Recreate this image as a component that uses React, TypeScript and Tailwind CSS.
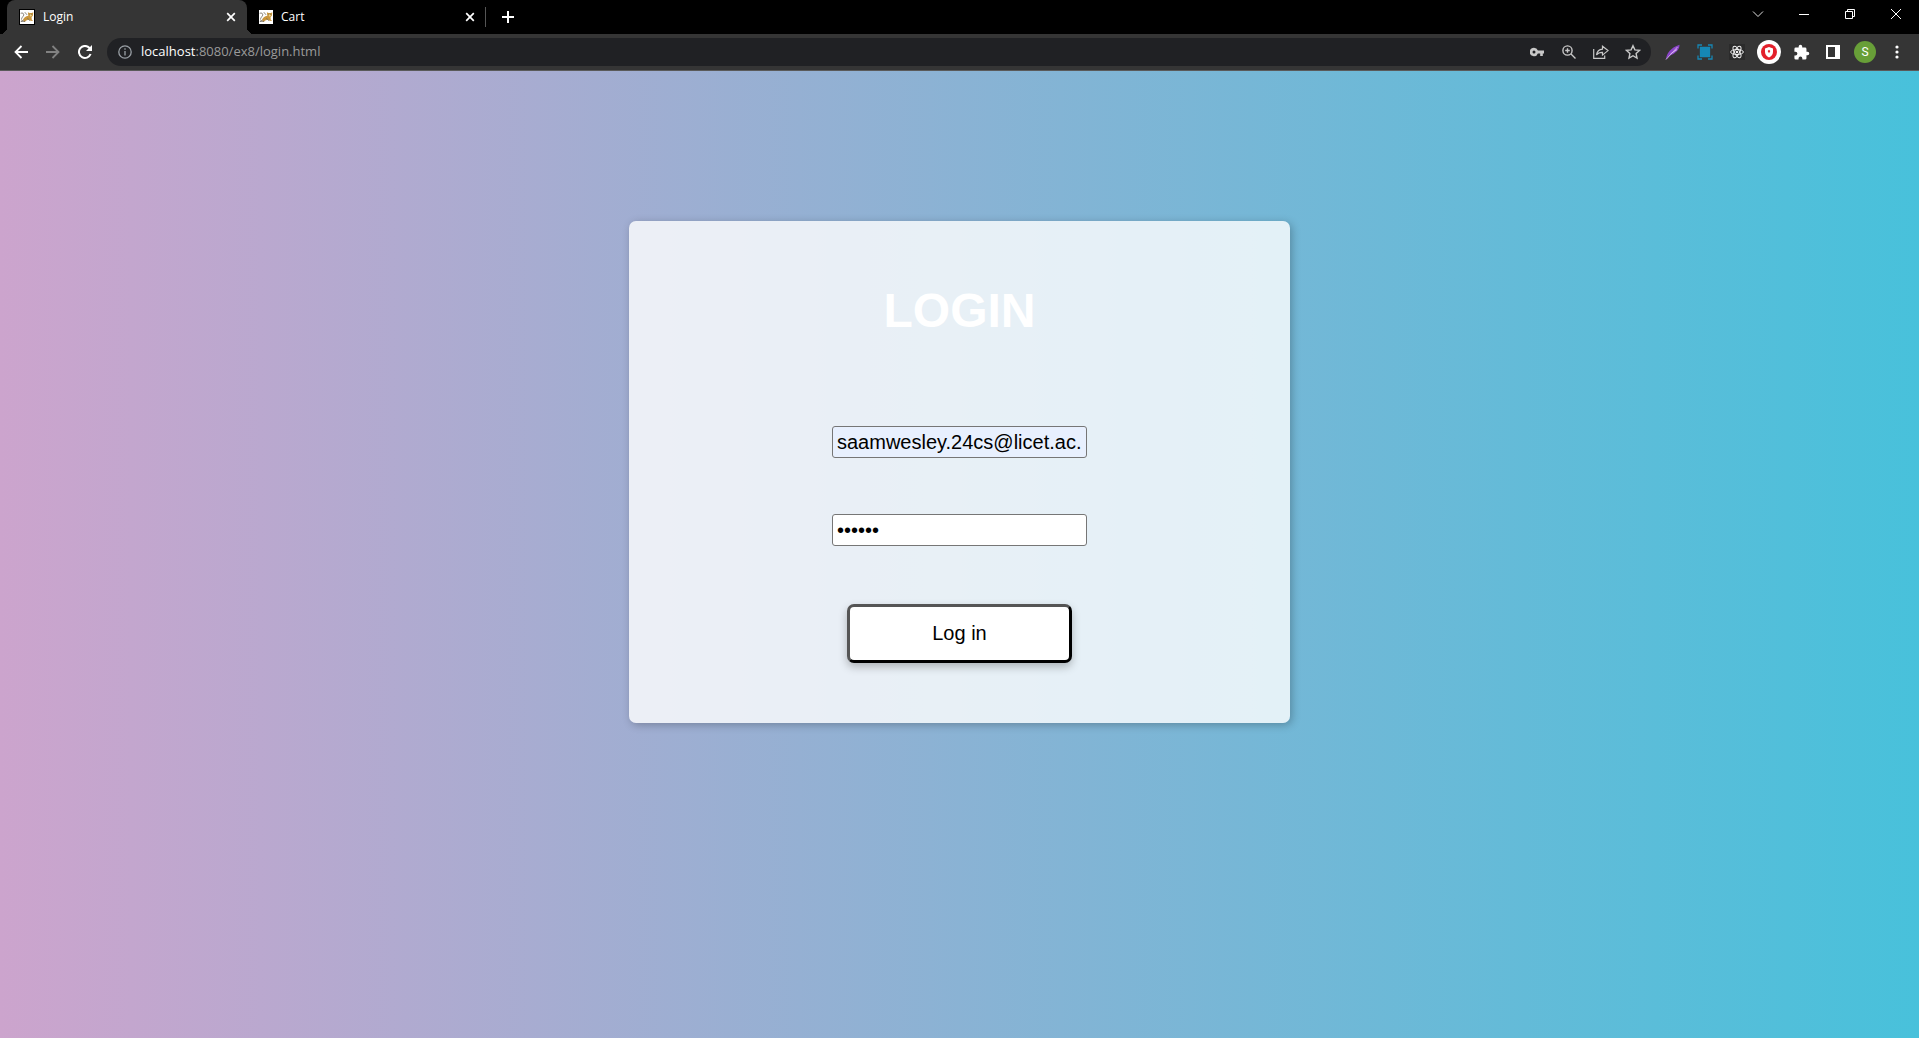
import React from "react";
import type { ReactNode } from "react";

function CatIcon({ size }: { size: string }) {
  return (
    <svg viewBox="0 0 16 16" className={size} aria-hidden="true">
      <rect width="16" height="16" fill="#fff" />
      <path d="M3.500 11.500c.5-2.500 3-4.500 6-5L9 2.500l2 .8h2.500l1.700-.8-.4 3.800-1.600 2 .3 2.700 1.700 1.500-3.200-.2-1.800-1.500-3 1.200-2.400 1.600z" fill="#c9963c" />
      <path d="M.8 3.800c2-1 4 .2 3.500 2S1.500 8.500 1.800 11M4 11.500l-3 1.500h5M5.500 2.500l2.500 3M8.500 9.500l3 2.800" stroke="#5d5647" strokeWidth="0.8" fill="none" />
      <path d="M10.800 4.500h3l-.6 2.500-1.600.3z" fill="#f0d48a" />
      <path d="M11.300 4.500v1M13.200 4.500v1" stroke="#443a24" strokeWidth="0.7" />
    </svg>
  );
}

function Close() {
  return (
    <svg viewBox="0 0 10 10" className="size-[10px]" stroke="#fff" strokeWidth="1.7" aria-hidden="true">
      <path d="M1.2 1.2l7.6 7.6M8.8 1.2L1.2 8.8" />
    </svg>
  );
}

function IconButton({ label, children, className = "w-8" }: { label: string; children: ReactNode; className?: string }) {
  return (
    <button type="button" aria-label={label} className={`flex h-7 shrink-0 items-center justify-center ${className}`}>
      {children}
    </button>
  );
}

function TabStrip() {
  return (
    <div className="flex h-[34px] items-stretch bg-black text-[12px] text-white">
      <div className="relative ml-[7px] flex w-60 items-center rounded-t-lg bg-[#353535] pr-[11px] pl-3">
        <span className="absolute bottom-0 -left-[7px] size-[7px] bg-[radial-gradient(circle_at_top_left,transparent_7px,#353535_7px)]" />
        <span className="absolute -right-[7px] bottom-0 size-[7px] bg-[radial-gradient(circle_at_top_right,transparent_7px,#353535_7px)]" />
        <span className="border border-black">
          <CatIcon size="size-[14px]" />
        </span>
        <span className="ml-2 flex-1">Login</span>
        <button type="button" aria-label="Close Login tab">
          <Close />
        </button>
      </div>
      <div className="flex w-[238px] items-center pr-[10px] pl-3">
        <CatIcon size="size-[14px]" />
        <span className="ml-2 flex-1">Cart</span>
        <button type="button" aria-label="Close Cart tab">
          <Close />
        </button>
      </div>
      <div className="my-[7px] border-l border-[#555]" />
      <IconButton label="New tab" className="ml-2 mt-[3px] w-7">
        <svg viewBox="0 0 12 12" className="size-3" stroke="#fff" strokeWidth="2">
          <path d="M6 0v12M0 6h12" />
        </svg>
      </IconButton>
      <div className="ml-auto flex items-start">
        <IconButton label="Search tabs" className="w-[46px]">
          <svg viewBox="0 0 12 12" className="size-3" fill="none" stroke="#e0e0e0">
            <path d="M1 3.500l5 5 5-5" />
          </svg>
        </IconButton>
        <IconButton label="Minimize" className="w-[46px]">
          <svg viewBox="0 0 10 10" className="size-[10px]" fill="none" stroke="#fff">
            <path d="M0 5.500h10" />
          </svg>
        </IconButton>
        <IconButton label="Restore" className="w-[46px]">
          <svg viewBox="0 0 10 10" className="size-[10px]" fill="none" stroke="#fff">
            <path d="M.5 2.500h7v7h-7zM2.500 2.500v-2h7v7h-2" />
          </svg>
        </IconButton>
        <IconButton label="Close window" className="w-[46px]">
          <svg viewBox="0 0 10 10" className="size-[10px]" fill="none" stroke="#fff">
            <path d="M0 0l10 10M10 0L0 10" />
          </svg>
        </IconButton>
      </div>
    </div>
  );
}

function Toolbar() {
  return (
    <div className="flex h-[37px] items-center border-b border-[#5a5a5a] bg-[#353535] pr-[6px] pl-[5px]">
      <IconButton label="Back">
        <svg viewBox="0 0 14 14" className="size-[14px]" fill="none" stroke="#fff" strokeWidth="1.8">
          <path d="M14 7H1.500M7.500 1L1.500 7l6 6" />
        </svg>
      </IconButton>
      <IconButton label="Forward">
        <svg viewBox="0 0 14 14" className="size-[14px]" fill="none" stroke="#828282" strokeWidth="1.8">
          <path d="M0 7h12.500M6.500 1l6 6-6 6" />
        </svg>
      </IconButton>
      <IconButton label="Reload">
        <svg viewBox="0 0 14 14" className="size-[14px]" fill="none" stroke="#fff" strokeWidth="2">
          <path d="M12.600 9A6 6 0 1 1 11.500 3L13 5" />
          <path d="M14 0v6H8z" fill="#fff" stroke="none" />
        </svg>
      </IconButton>
      <div className="ml-[6px] flex h-7 min-w-0 flex-1 items-center rounded-full bg-[#202124] pr-[2px] pl-[11px]">
        <svg viewBox="0 0 14 14" className="size-[14px] shrink-0" fill="none" stroke="#9aa0a6" strokeWidth="1.3" aria-hidden="true">
          <circle cx="7" cy="7" r="6.200" />
          <path d="M7 6v4.500M7 3.300v1.500" />
        </svg>
        <div className="ml-[9px] min-w-0 flex-1 text-[13px] text-[#9a9a9a]">
          <span className="text-white">localhost</span>:8080/ex8/login.html
        </div>
        <IconButton label="Saved passwords">
          <svg viewBox="0 0 14 10" className="h-[10px] w-[14px]" fill="#c8c8c8">
            <path fillRule="evenodd" d="M4 .8a4.200 4.200 0 1 0 3.900 5.700h2.300V9h2.600V6.500H14v-3H7.900A4.200 4.200 0 0 0 4 .8zM4 3.500a1.500 1.500 0 1 1 0 3 1.500 1.500 0 0 1 0-3z" />
          </svg>
        </IconButton>
        <IconButton label="Zoom">
          <svg viewBox="0 0 14 14" className="size-[14px]" fill="none" stroke="#c8c8c8" strokeWidth="1.4">
            <circle cx="5.500" cy="5.500" r="4.600" />
            <path d="M9 9l4.500 4.500M5.500 3.200v4.600M3.200 5.500h4.600" />
          </svg>
        </IconButton>
        <IconButton label="Share">
          <svg viewBox="0 0 16 14" className="h-[14px] w-4" fill="none" stroke="#c8c8c8" strokeWidth="1.2">
            <path d="M.7 4v9.300h11V10.500M3.500 10C4 6.500 6 4.500 9.500 4.200V1.200L15 5.600l-5.500 4.500V7.300C7 7.200 5 8 3.500 10z" />
          </svg>
        </IconButton>
        <IconButton label="Bookmark">
          <svg viewBox="0 0 16 16" className="size-4" fill="none" stroke="#c8c8c8" strokeWidth="1.4">
            <path d="M8 1.700l1.900 4.200 4.600.5-3.400 3.100.9 4.500L8 11.700 4 14l.9-4.500L1.500 6.400l4.600-.5z" />
          </svg>
        </IconButton>
      </div>
      <div className="ml-[6px] flex items-center">
        <IconButton label="Feather extension">
          <svg viewBox="0 0 16 16" className="size-4">
            <path d="M1 15.500C1.500 9 6 3.500 14.500.8c.3 4.200-3.500 8.700-10 11z" fill="#8a45c8" />
            <path d="M1 15.500L12.500 3M5.500 10l6.500-4.500" stroke="#dcb8f2" strokeWidth=".9" />
          </svg>
        </IconButton>
        <IconButton label="Capture extension">
          <svg viewBox="0 0 16 16" className="size-4" fill="none" stroke="#1687b5" strokeWidth="1.300">
            <path d="M1 4.500V1h4M11 1h4v3.500M15 11.500V15h-4M5 15H1v-3.500" />
            <path d="M3.500 3.500h9v9h-9z" fill="#1687b5" />
          </svg>
        </IconButton>
        <IconButton label="React extension">
          <span className="flex size-4 items-center justify-center bg-[#2b2b2b]">
            <svg viewBox="0 0 16 16" className="size-[14px]" fill="none" stroke="#f0f0f0" strokeWidth="1.1">
              <ellipse cx="8" cy="8" rx="7.300" ry="2.900" />
              <ellipse cx="8" cy="8" rx="7.300" ry="2.900" transform="rotate(60 8 8)" />
              <ellipse cx="8" cy="8" rx="7.300" ry="2.900" transform="rotate(120 8 8)" />
              <circle cx="8" cy="8" r="1.400" fill="#f0f0f0" stroke="none" />
            </svg>
          </span>
        </IconButton>
        <IconButton label="Shield extension">
          <svg viewBox="0 0 24 24" className="size-6">
            <circle cx="12" cy="12" r="12" fill="#fff" />
            <circle cx="12" cy="12" r="8" fill="#e3202b" />
            <path d="M12 7l4 1.400V12c0 2.500-1.600 4.300-4 5.400-2.400-1.100-4-2.900-4-5.400V8.400z" fill="#fff" />
            <path d="M12 9.800l1.300 1.300L12 13.200l-1.300-2.100z" fill="#e3202b" />
          </svg>
        </IconButton>
        <IconButton label="Extensions">
          <svg viewBox="0 0 24 24" className="size-[17px]" fill="#fff">
            <path d="M20.500 11H19V7a2 2 0 0 0-2-2h-4V3.500a2.500 2.500 0 0 0-5 0V5H4a2 2 0 0 0-2 2v3.800h1.500a2.700 2.700 0 0 1 0 5.400H2V20a2 2 0 0 0 2 2h3.800v-1.500a2.700 2.700 0 0 1 5.400 0V22H17a2 2 0 0 0 2-2v-4h1.500a2.500 2.500 0 0 0 0-5z" />
          </svg>
        </IconButton>
        <IconButton label="Side panel">
          <svg viewBox="0 0 14 14" className="size-[14px]">
            <path fillRule="evenodd" d="M0 0h14v14H0zM2 2v10h7V2z" fill="#fff" />
          </svg>
        </IconButton>
        <IconButton label="Profile">
          <span className="flex size-[22px] items-center justify-center rounded-full bg-[#689f38] font-[Roboto,sans-serif] text-[12px] text-white">S</span>
        </IconButton>
        <IconButton label="Menu">
          <svg viewBox="0 0 4 14" className="h-[14px] w-1" fill="#fff">
            <circle cx="2" cy="2" r="1.600" />
            <circle cx="2" cy="7" r="1.600" />
            <circle cx="2" cy="12" r="1.600" />
          </svg>
        </IconButton>
      </div>
    </div>
  );
}

const fieldClass =
  "h-8 w-[255px] rounded-[3px] border border-[#767676] px-1 text-[20px] text-black outline-none";

export default function App() {
  return (
    <div className="flex min-h-screen flex-col font-['Open_Sans','Noto_Sans',sans-serif]">
      <header>
        <TabStrip />
        <Toolbar />
      </header>
      <main className="flex flex-1 flex-col items-center bg-[linear-gradient(to_right,#cca4cd,#48c1db)] pt-[150px] font-['Liberation_Sans',Arial,sans-serif]">
        <form
          onSubmit={(e) => e.preventDefault()}
          className="flex w-[661px] max-w-full flex-col items-center rounded-[7px] bg-white/80 pt-[62px] pb-[60px] shadow-[2px_2px_8px_0_rgba(0,0,0,0.25)]"
        >
          <h1 className="text-[48px] leading-[56px] font-bold text-white">LOGIN</h1>
          <input
            type="text"
            aria-label="Email"
            defaultValue="saamwesley.24cs@licet.ac."
            className={`mt-[87px] bg-[#e8f0fe] ${fieldClass}`}
          />
          <input type="password" aria-label="Password" defaultValue="secret" className={`mt-14 bg-white ${fieldClass}`} />
          <button
            type="submit"
            className="mt-[58px] h-[59px] w-[225px] rounded-[7px] border-[3px] border-t-[#555] border-r-black border-b-black border-l-[#555] bg-white pb-[2px] text-[20px] text-black shadow-[0_4px_8px_0_rgba(0,0,0,0.25)]"
          >
            Log in
          </button>
        </form>
      </main>
    </div>
  );
}
